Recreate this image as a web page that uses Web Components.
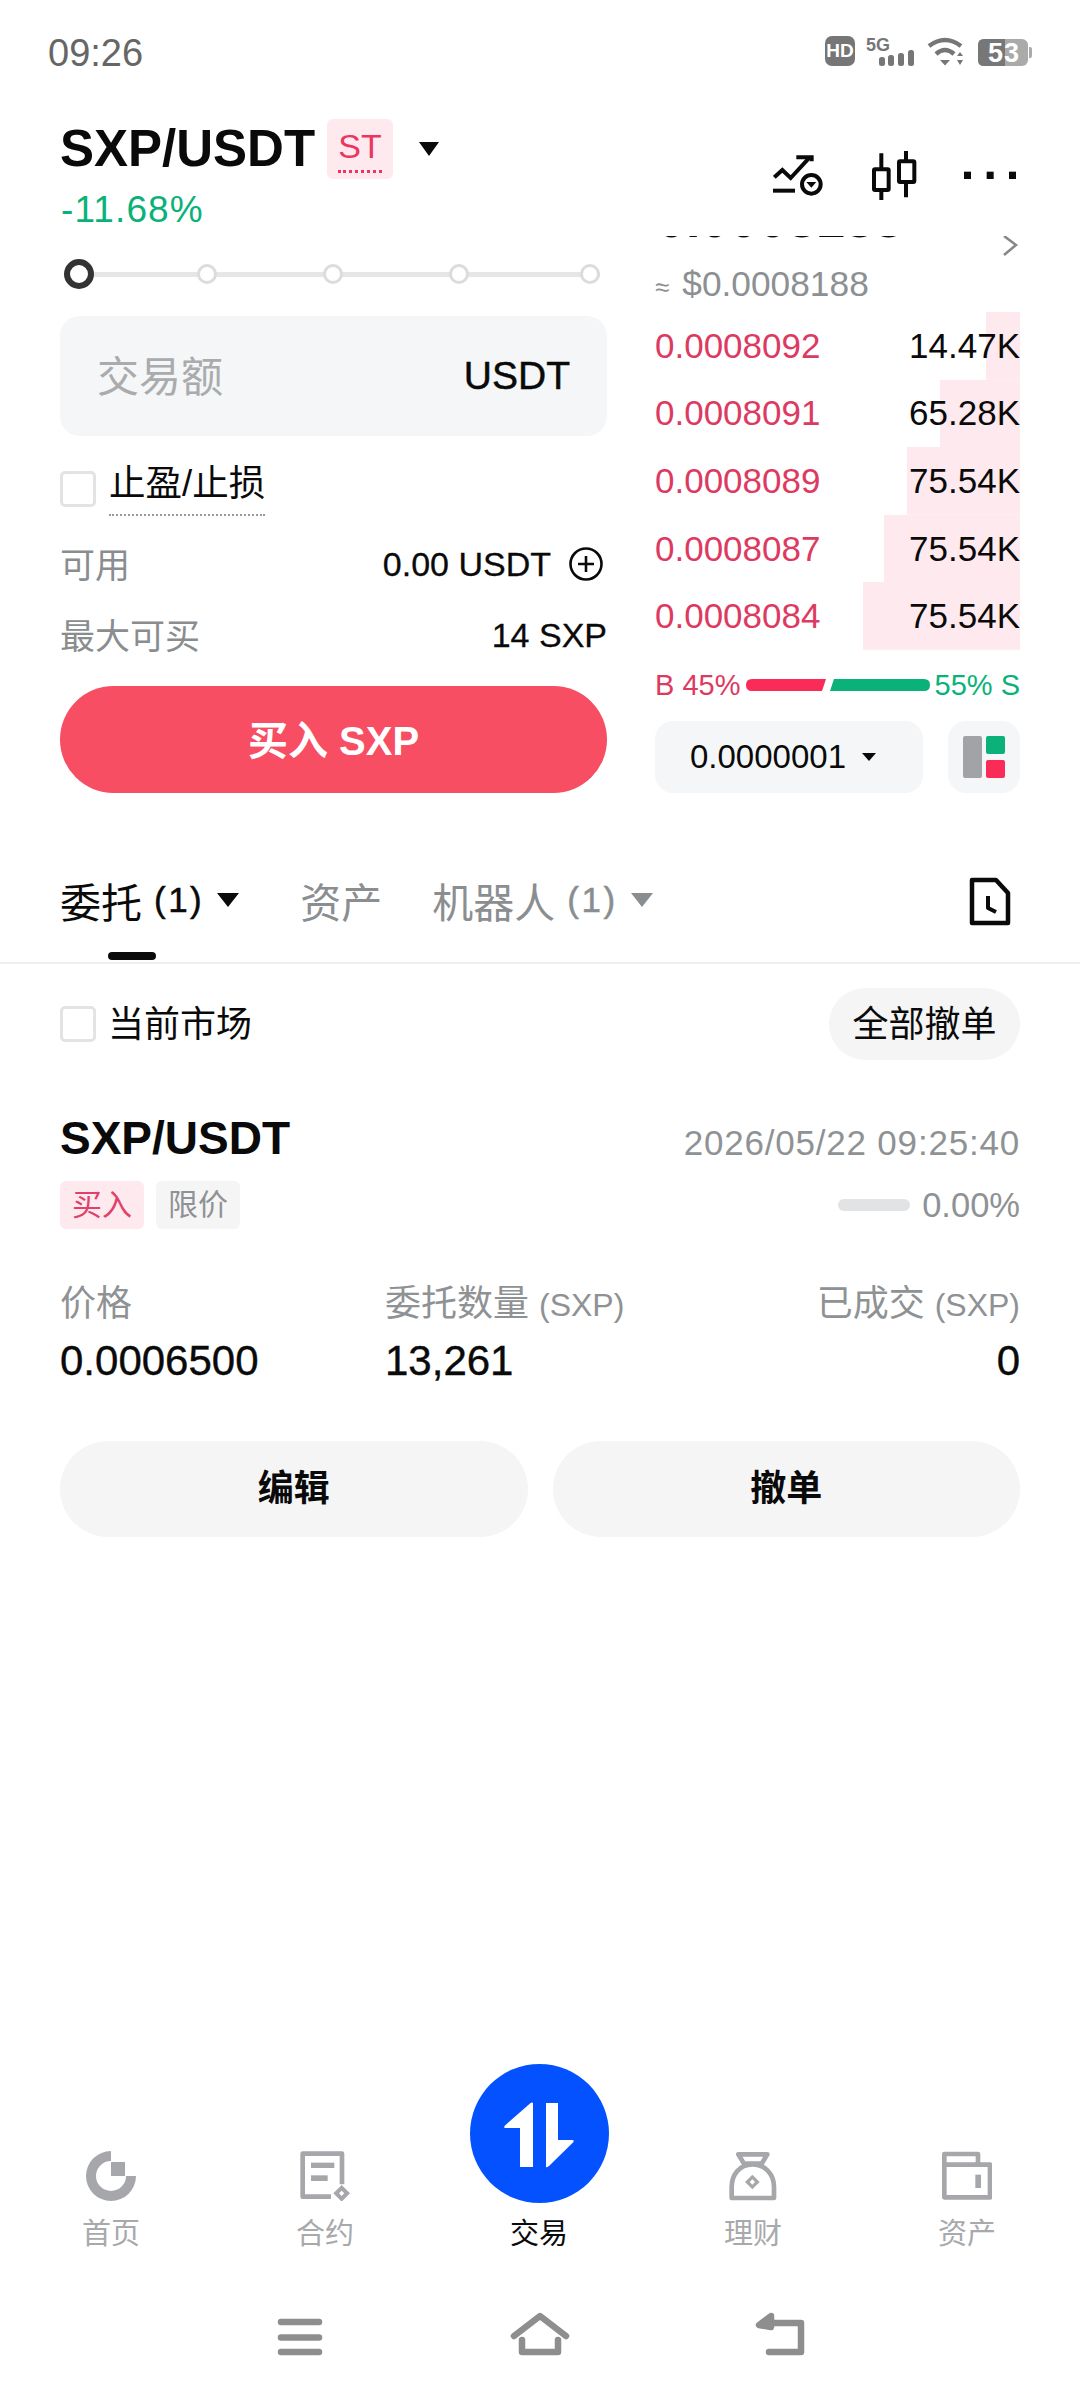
<!DOCTYPE html>
<html lang="zh-CN">
<head>
<meta charset="utf-8">
<title>SXP/USDT</title>
<style>
  html, body { margin: 0; background: #fff; }
  body {
    width: 1080px;
    height: 2400px;
    overflow: hidden;
    font-family: "Liberation Sans", "Noto Sans CJK SC", sans-serif;
    color: #0a0a0a;
    display: flex;
    flex-direction: column;
  }
  .main { display: grid; grid-template-columns: 547px 365px; gap: 48px; padding: 0 60px; height: 604px; }
</style>
</head>
<body>
<status-bar></status-bar>
<pair-header></pair-header>
<div class="main">
  <order-form></order-form>
  <order-book></order-book>
</div>
<order-tabs></order-tabs>
<filter-row></filter-row>
<order-card></order-card>
<tab-bar></tab-bar>
<nav-bar></nav-bar>

<script>
class StatusBar extends HTMLElement {
  constructor() {
    super();
    this.attachShadow({ mode: "open" });
    this.shadowRoot.innerHTML = `
      <style>
        :host { display: flex; height: 106px; padding: 0 48px; justify-content: space-between; box-sizing: border-box; }
        .time { font-size: 38px; line-height: 106px; color: #666; }
        svg { display: block; margin-top: 30px; margin-right: -4px; }
      </style>
      <span class="time">09:26</span>
      <svg width="212" height="40" viewBox="824 30 212 40">
        <rect x="825" y="36" width="30" height="30" rx="7" fill="#767676"/>
        <text x="840" y="57" font-size="19" font-weight="700" fill="#fff" text-anchor="middle">HD</text>
        <text x="866" y="51" font-size="19" font-weight="700" fill="#767676" textLength="24" lengthAdjust="spacingAndGlyphs">5G</text>
        <rect x="879" y="57" width="6" height="9" rx="2.5" fill="#767676"/>
        <rect x="888" y="55" width="6" height="11" rx="2.5" fill="#767676"/>
        <rect x="898" y="53" width="6" height="13" rx="2.5" fill="#767676"/>
        <rect x="908" y="50" width="6" height="16" rx="2.5" fill="#767676"/>
        <g fill="none" stroke="#767676" stroke-width="4.5">
          <path d="M929 46 Q945 34 961 46"/>
          <path d="M936 54 Q945 46 954 54"/>
        </g>
        <path d="M940 60 L950 60 L945 65.5 Z M957 56 L963 56 L960 52 Z M957 60 L963 60 L960 65 Z" fill="#767676"/>
        <rect x="978" y="39" width="50" height="27" rx="6" fill="#aaa"/>
        <path d="M984 39 H1005 V66 H984 Q978 66 978 60 V45 Q978 39 984 39 Z" fill="#777"/>
        <path d="M1029 47 h1 q2 0 2 2 v7 q0 2 -2 2 h-1 Z" fill="#aaa"/>
        <text x="1004" y="62" font-size="27" font-weight="700" fill="#fff" text-anchor="middle" letter-spacing="1">53</text>
      </svg>`;
  }
}

class PairHeader extends HTMLElement {
  constructor() {
    super();
    this.attachShadow({ mode: "open" });
    this.shadowRoot.innerHTML = `
      <style>
        :host { display: flex; justify-content: space-between; height: 130px; padding: 13px 60px 0; box-sizing: border-box; }
        .title { display: flex; align-items: center; height: 60px; }
        .name { font-size: 51px; line-height: 60px; font-weight: 700; }
        .badge { width: 66px; height: 60px; margin-left: 12px; border-radius: 6px; background: #feeaee; box-sizing: border-box; padding-top: 8px; text-align: center; color: #ec3560; font-size: 34px; }
        .badge span { display: inline-block; line-height: 38px; padding-bottom: 5px; border-bottom: 3px dotted #ec3560; }
        .caret { width: 0; height: 0; margin-left: 26px; border: 10px solid transparent; border-top: 14px solid #0a0a0a; border-bottom: 0; }
        .change { margin-top: 11px; margin-left: 1px; font-size: 37px; line-height: 40px; letter-spacing: 1.1px; color: #0ab27a; }
        .icons { display: flex; gap: 40px; padding-top: 31px; }
        .icons svg { display: block; }
      </style>
      <div>
        <div class="title">
          <span class="name">SXP/USDT</span>
          <div class="badge"><span>ST</span></div>
          <div class="caret"></div>
        </div>
        <div class="change">-11.68%</div>
      </div>
      <div class="icons">
        <svg width="50" height="50" viewBox="100 450 150 150" fill="none" stroke="#0a0a0a" stroke-width="12" style="margin-right:7px">
          <path d="M104 532 L128 510 L153 534 L210 472"/>
          <path d="M170 472 H216 V484" />
          <path d="M100 572 H166"/>
          <circle cx="215" cy="553" r="28"/>
          <path d="M200 546 H230 L215 563 Z" fill="#0a0a0a" stroke="none"/>
        </svg>
        <svg width="50" height="50" viewBox="390 450 150 150" fill="none" stroke="#0a0a0a" stroke-width="12">
          <path d="M424 460 V505 M424 572 V600 M498 453 V482 M498 548 V592"/>
          <rect x="402" y="508" width="44" height="62" rx="3"/>
          <rect x="477" y="484" width="46" height="62" rx="3"/>
        </svg>
        <svg width="60" height="50" viewBox="660 450 180 150" fill="#0a0a0a">
          <rect x="672" y="515" width="21" height="22"/>
          <rect x="740" y="515" width="21" height="22"/>
          <rect x="807" y="515" width="21" height="22"/>
        </svg>
      </div>`;
  }
}

// Checkbox square, used in the form and in the filter row
class CheckBox extends HTMLElement {
  constructor() {
    super();
    this.attachShadow({ mode: "open" });
    this.shadowRoot.innerHTML = `
      <style>
        :host { display: block; flex: none; width: 36px; height: 36px; box-sizing: border-box; border: 3px solid #e2e3e4; border-radius: 5px; background: #fff; }
      </style>`;
  }
}

class OrderForm extends HTMLElement {
  constructor() {
    super();
    this.attachShadow({ mode: "open" });
    this.shadowRoot.innerHTML = `
      <style>
        :host { display: block; padding-top: 23px; }
        .slider { display: flex; align-items: center; height: 30px; width: 536px; margin-left: 4px; background: linear-gradient(#e6e6e6, #e6e6e6) center / 100% 5px no-repeat; }
        .knob { width: 30px; height: 30px; box-sizing: border-box; border: 6px solid #333; border-radius: 50%; background: #fff; }
        .dot { width: 20px; height: 20px; box-sizing: border-box; border: 3px solid #dcdcdc; border-radius: 50%; background: #fff; margin-left: 106px; }
        .slider .dot:nth-child(2) { margin-left: 103px; }
        .slider .dot:last-child { margin-left: 111px; }
        .input { display: flex; justify-content: space-between; align-items: center; height: 120px; margin-top: 27px; padding: 0 37px 0 37px; border-radius: 20px; background: #f5f6f7; }
        .placeholder { font-size: 42px; color: #a9abac; padding-bottom: 6px; }
        .unit { font-size: 39px; -webkit-text-stroke: .5px #0a0a0a; }
        .check { display: flex; align-items: flex-start; gap: 13px; margin-top: 28px; }
        .check check-box { margin-top: 7px; }
        .check span { font-size: 36.5px; line-height: 40px; padding-bottom: 10px; border-bottom: 2px dotted #999; }
        .row { display: flex; justify-content: space-between; align-items: center; height: 40px; font-size: 34px; }
        .row b { font-weight: 400; -webkit-text-stroke: .3px #0a0a0a; }
        .label { color: #8a8d8f; font-size: 35px; padding-bottom: 3px; }
        .avail { margin-top: 28px; padding-right: 3px; }
        .avail div { display: flex; align-items: center; gap: 17px; }
        .max { margin-top: 31px; }
        .buy { display: flex; justify-content: center; align-items: center; height: 107px; box-sizing: border-box; padding-bottom: 4px; margin-top: 31px; border-radius: 54px; background: #f74e63; color: #fff; font-size: 40px; font-weight: 700; }
      </style>
      <div class="slider">
        <div class="knob"></div><div class="dot"></div><div class="dot"></div><div class="dot"></div><div class="dot"></div>
      </div>
      <div class="input"><span class="placeholder">交易额</span><span class="unit">USDT</span></div>
      <div class="check"><check-box></check-box><span>止盈/止损</span></div>
      <div class="row avail">
        <span class="label">可用</span>
        <div><b>0.00 USDT</b>
          <svg width="36" height="36" viewBox="0 0 36 36" fill="none" stroke="#0a0a0a" stroke-width="2.6">
            <circle cx="18" cy="18" r="15.5"/><path d="M18 10 V26 M10 18 H26"/>
          </svg>
        </div>
      </div>
      <div class="row max"><span class="label">最大可买</span><b>14 SXP</b></div>
      <div class="buy">买入 SXP</div>`;
  }
}

// One ask level: the pink depth bar is a background sized by the "depth" attribute
class BookRow extends HTMLElement {
  constructor() {
    super();
    this.attachShadow({ mode: "open" });
    this.shadowRoot.innerHTML = `
      <style>
        :host { display: flex; justify-content: space-between; align-items: center; height: 67.6px; font-size: 35px; background: linear-gradient(#feeaee, #feeaee) right / var(--depth) 100% no-repeat; }
        .price { color: #dd3a62; }
      </style>
      <span class="price"><slot name="price"></slot></span>
      <span><slot name="qty"></slot></span>`;
  }
  connectedCallback() {
    this.style.setProperty("--depth", this.getAttribute("depth") + "px");
  }
}

class OrderBook extends HTMLElement {
  constructor() {
    super();
    this.attachShadow({ mode: "open" });
    this.shadowRoot.innerHTML = `
      <style>
        :host { display: block; }
        .top { display: flex; justify-content: space-between; height: 28px; overflow: hidden; }
        .last { margin-top: -43px; margin-left: 2px; font-size: 52px; line-height: 52px; font-weight: 700; }
        .top svg { display: block; margin-top: -2px; }
        .fiat { height: 40px; margin-bottom: 8px; font-size: 35.300px; line-height: 40px; color: #8d9092; }
        .fiat small { font-size: 26px; margin-right: 13px; }
        .ratio { display: flex; justify-content: space-between; align-items: center; height: 30px; margin-top: 20.5px; font-size: 29px; }
        .ratio svg { display: block; }
        .b { color: #dd3a62; }
        .s { color: #0ab27a; }
        .tools { display: flex; justify-content: space-between; margin-top: 21px; }
        .tick { display: flex; align-items: center; gap: 16px; width: 268px; height: 72px; padding-left: 35px; box-sizing: border-box; border-radius: 18px; background: #f5f6f7; font-size: 33px; }
        .tick i { width: 0; height: 0; border: 7px solid transparent; border-top: 8px solid #0a0a0a; border-bottom: 0; }
        .layout { display: flex; justify-content: center; align-items: center; width: 72px; height: 72px; border-radius: 18px; background: #f5f6f7; }
      </style>
      <div class="top">
        <span class="last">0.0008188</span>
        <svg width="18" height="24" viewBox="0 0 18 24" fill="none" stroke="#888" stroke-width="2.6"><path d="M2 2 L14 11 L2 21"/></svg>
      </div>
      <div class="fiat"><small>≈</small>$0.0008188</div>
      <book-row depth="34"><span slot="price">0.0008092</span><span slot="qty">14.47K</span></book-row>
      <book-row depth="80"><span slot="price">0.0008091</span><span slot="qty">65.28K</span></book-row>
      <book-row depth="113"><span slot="price">0.0008089</span><span slot="qty">75.54K</span></book-row>
      <book-row depth="136"><span slot="price">0.0008087</span><span slot="qty">75.54K</span></book-row>
      <book-row depth="157"><span slot="price">0.0008084</span><span slot="qty">75.54K</span></book-row>
      <div class="ratio">
        <span class="b">B 45%</span>
        <svg width="184" height="12" viewBox="0 0 184 12">
          <path d="M6 0 H80 L76 12 H6 Q0 12 0 6 Q0 0 6 0 Z" fill="#fb2b57"/>
          <path d="M88 0 H178 Q184 0 184 6 Q184 12 178 12 H84 Z" fill="#0ab27a"/>
        </svg>
        <span class="s">55% S</span>
      </div>
      <div class="tools">
        <div class="tick">0.0000001<i></i></div>
        <div class="layout">
          <svg width="42" height="42" viewBox="0 0 42 42">
            <rect width="19" height="42" rx="2" fill="#a1a3a6"/>
            <rect x="23" width="19" height="18" rx="2" fill="#0ab27a"/>
            <rect x="23" y="24" width="19" height="18" rx="2" fill="#fb2b57"/>
          </svg>
        </div>
      </div>`;
  }
}

class OrderTabs extends HTMLElement {
  constructor() {
    super();
    this.attachShadow({ mode: "open" });
    this.shadowRoot.innerHTML = `
      <style>
        :host { display: flex; align-items: center; position: relative; height: 124px; padding: 0 0 2px 60px; box-sizing: border-box; border-bottom: 2px solid #eeeeee; font-size: 41px; color: #8b8e90; }
        .tab { display: flex; align-items: center; }
        .on { color: #0a0a0a; }
        .count { font-size: 35px; margin-left: 12px; letter-spacing: 2.5px; -webkit-text-stroke: .5px currentColor; }
        i { width: 0; height: 0; margin-left: 13px; border: 11px solid transparent; border-top: 14px solid currentColor; border-bottom: 0; }
        .bar { position: absolute; left: 108px; bottom: 2px; width: 48px; height: 8px; border-radius: 4px; background: #0a0a0a; }
        svg { display: block; position: absolute; right: 68px; top: 36px; }
      </style>
      <div class="tab on">委托<span class="count">(1)</span><i></i></div>
      <div class="tab" style="margin-left:61px">资产</div>
      <div class="tab" style="margin-left:50px">机器人<span class="count">(1)</span><i></i></div>
      <div class="bar"></div>
      <svg width="44" height="52" viewBox="968 876 44 52" fill="none" stroke="#0a0a0a" stroke-width="4.5" stroke-linejoin="round">
        <path d="M972 880 H996 L1008 893 V923 H972 Z"/>
        <path d="M988 896 V908 L996 912" stroke-width="4"/>
      </svg>`;
  }
}

class FilterRow extends HTMLElement {
  constructor() {
    super();
    this.attachShadow({ mode: "open" });
    this.shadowRoot.innerHTML = `
      <style>
        :host { display: flex; align-items: center; padding: 24px 60px 0; font-size: 36px; }
        span { margin-left: 12px; padding-bottom: 7px; }
        .all { display: flex; justify-content: center; align-items: center; width: 191px; height: 72px; box-sizing: border-box; padding-bottom: 7px; margin-left: auto; border-radius: 36px; background: #f5f5f6; }
      </style>
      <check-box></check-box>
      <span>当前市场</span>
      <div class="all">全部撤单</div>`;
  }
}

class OrderCard extends HTMLElement {
  constructor() {
    super();
    this.attachShadow({ mode: "open" });
    this.shadowRoot.innerHTML = `
      <style>
        :host { display: block; padding: 55px 60px 0; }
        .line { display: flex; justify-content: space-between; align-items: flex-start; }
        .pair { font-size: 46px; line-height: 46px; font-weight: 700; }
        .date { margin-top: 8px; font-size: 35px; line-height: 40px; letter-spacing: .8px; color: #8f9294; }
        .tags { display: flex; gap: 12px; margin-top: 18px; align-items: center; }
        .tag { width: 84px; height: 48px; border-radius: 6px; font-size: 30px; line-height: 48px; text-align: center; background: #f5f5f6; color: #8f9294; }
        .tag.buy { background: #feeaee; color: #e0406a; }
        .fill { display: flex; align-items: center; gap: 12px; margin-left: auto; font-size: 34.5px; color: #8f9294; }
        .fill i { width: 72px; height: 12px; border-radius: 6px; background: #e1e3e4; }
        .grid { display: grid; grid-template-columns: 325px 1fr auto; margin-top: 55px; }
        .head { font-size: 36px; line-height: 40px; color: #8f9294; margin-bottom: 14px; }
        .head small { font-size: 32px; }
        .val { font-size: 42px; line-height: 44px; -webkit-text-stroke: .4px #0a0a0a; }
        .end { text-align: right; }
        .btns { display: grid; grid-template-columns: 1fr 1fr; gap: 25px; margin-top: 58px; }
        .btn { height: 96px; border-radius: 48px; background: #f5f5f6; font-size: 36px; font-weight: 700; line-height: 96px; text-align: center; }
      </style>
      <div class="line">
        <span class="pair">SXP/USDT</span>
        <span class="date">2026/05/22 09:25:40</span>
      </div>
      <div class="tags">
        <div class="tag buy">买入</div>
        <div class="tag">限价</div>
        <div class="fill"><i></i>0.00%</div>
      </div>
      <div class="grid">
        <div class="head">价格</div>
        <div class="head">委托数量 <small>(SXP)</small></div>
        <div class="head end">已成交 <small>(SXP)</small></div>
        <div class="val">0.0006500</div>
        <div class="val">13,261</div>
        <div class="val end">0</div>
      </div>
      <div class="btns"><div class="btn">编辑</div><div class="btn">撤单</div></div>`;
  }
}

// Bottom tab with the icon passed in the default slot
class TabItem extends HTMLElement {
  constructor() {
    super();
    this.attachShadow({ mode: "open" });
    this.shadowRoot.innerHTML = `
      <style>
        :host { display: flex; flex-direction: column; align-items: center; gap: 12px; font-size: 29px; line-height: 40px; color: #a7a9ab; }
        :host([active]) { color: #0a0a0a; gap: 10px; }
        .ic { display: flex; }
        span { margin: 1px 0 -1px; }
      </style>
      <div class="ic"><slot name="icon"></slot></div>
      <span><slot></slot></span>`;
  }
}

class TabBar extends HTMLElement {
  constructor() {
    super();
    this.attachShadow({ mode: "open" });
    this.shadowRoot.innerHTML = `
      <style>
        :host { display: grid; grid-template-columns: repeat(5, 214px); align-items: end; padding: 0 4px; margin-top: auto; height: 189px; }
        svg { display: block; }
      </style>
      <tab-item>
        <svg slot="icon" width="50" height="50" viewBox="87 2151 50 50" fill="#a5a7aa">
          <path d="M112 2151 A25 25 0 1 0 137 2176 H126 V2176 H127 A15 15 0 1 1 112 2161 Z"/>
          <rect x="112" y="2162" width="14" height="14"/>
        </svg>首页</tab-item>
      <tab-item>
        <svg slot="icon" width="50" height="50" viewBox="782 275 150 150" fill="#a5a7aa">
          <path d="M875 412 H790 V283 H908 V375" fill="none" stroke="#a5a7aa" stroke-width="14" stroke-linejoin="round"/>
          <rect x="815" y="310" width="70" height="16"/>
          <rect x="815" y="348" width="50" height="17"/>
          <path fill-rule="evenodd" d="M907 377 L932 402 L907 427 L882 402 Z M907 394 L899 402 L907 410 L915 402 Z"/>
        </svg>合约</tab-item>
      <tab-item active>
        <svg slot="icon" width="139" height="139" viewBox="0 0 139 139">
          <circle cx="69.500" cy="69.500" r="69.500" fill="#0452ff"/>
          <path d="M63 39 V103 H50 V64 H35.500 Q33 64 35 61.500 L60 39.500 Q62 38 63 39 Z" fill="#fff"/>
          <path d="M76 39 H88 V76 H102 Q105 76 103 78.500 L79 102 Q76 104 76 103 Z" fill="#fff"/>
        </svg>交易</tab-item>
      <tab-item>
        <svg slot="icon" width="50" height="50" viewBox="564 272 150 150" fill="none" stroke="#a5a7aa" stroke-width="14" stroke-linejoin="round">
          <path d="M595 282 H682 L665 310 H612 Z"/>
          <path d="M637 312 C598 312 575 345 575 380 V413 H702 V380 C702 345 678 312 637 312 Z"/>
          <path fill-rule="evenodd" d="M637 343 L659 365 L637 387 L615 365 Z M637 357 L629 365 L637 373 L645 365 Z" fill="#a5a7aa" stroke="none"/>
        </svg>理财</tab-item>
      <tab-item>
        <svg slot="icon" width="50" height="50" viewBox="1205 274 150 150" fill="none" stroke="#a5a7aa" stroke-width="14" stroke-linejoin="round">
          <path d="M1212 315 V283 H1313 V315"/>
          <path d="M1212 315 H1349 V413 H1212 Z"/>
          <rect x="1305" y="345" width="17" height="40" fill="#a5a7aa" stroke="none"/>
        </svg>资产</tab-item>`;
  }
}

class NavBar extends HTMLElement {
  constructor() {
    super();
    this.attachShadow({ mode: "open" });
    this.shadowRoot.innerHTML = `
      <style>
        :host { display: block; height: 147px; }
        svg { display: block; }
      </style>
      <svg width="1080" height="147" viewBox="0 2253 1080 147" fill="none" stroke="#8e8e8e" stroke-width="6.500" stroke-linecap="round" stroke-linejoin="round">
        <path d="M281 2322 H319 M281 2337.500 H319 M281 2352 H319"/>
        <path d="M514 2336 L540 2316 L566 2336"/>
        <path d="M522 2340 V2352 H558 V2340"/>
        <path d="M764 2323 H801 V2352 H769"/>
        <path d="M771 2316 L759 2325 L771 2327 Z" fill="#8e8e8e"/>
      </svg>`;
  }
}

customElements.define("status-bar", StatusBar);
customElements.define("pair-header", PairHeader);
customElements.define("check-box", CheckBox);
customElements.define("order-form", OrderForm);
customElements.define("book-row", BookRow);
customElements.define("order-book", OrderBook);
customElements.define("order-tabs", OrderTabs);
customElements.define("filter-row", FilterRow);
customElements.define("order-card", OrderCard);
customElements.define("tab-item", TabItem);
customElements.define("tab-bar", TabBar);
customElements.define("nav-bar", NavBar);
</script>
</body>
</html>
